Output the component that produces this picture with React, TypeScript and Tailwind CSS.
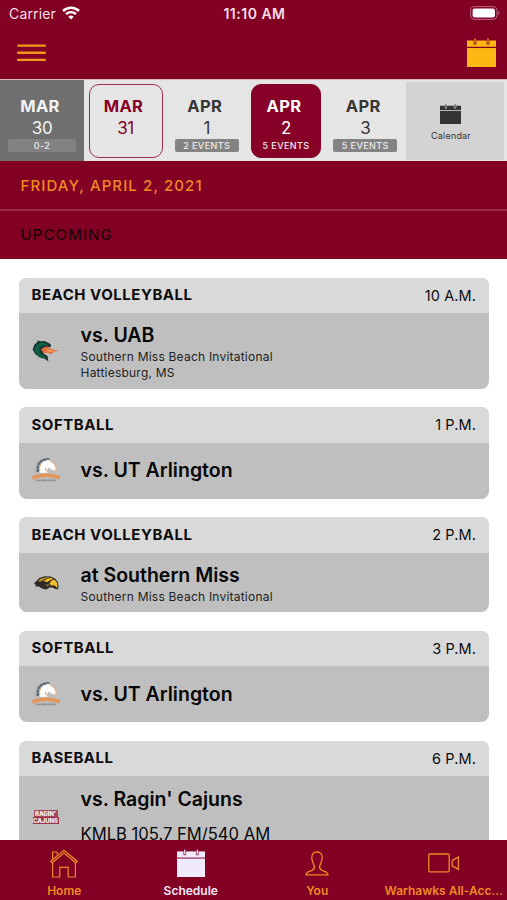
import { ReactNode } from "react";
import clsx from "clsx";

type DayProps = {
  month: string;
  day: string;
  badge?: string;
  variant?: "past" | "today" | "selected" | "normal";
};

type GameProps = {
  sport: string;
  time: string;
  title: string;
  lines?: string[];
  radio?: string;
  logo: ReactNode;
  bodyClass: string;
};

function CalendarIcon({ className, line }: { className: string; line: string }) {
  return (
    <svg viewBox="0 0 29 29" className={className} preserveAspectRatio="none">
      <path d="M0 2.5h29V29H0z" fill="currentColor" />
      <path d="M0 9.4h29" stroke={line} strokeWidth="1.3" />
      <path d="M8 2v4.6M21 2v4.6" stroke={line} strokeWidth="2.8" />
      <path d="M8 .4v5M21 .4v5" stroke="currentColor" strokeWidth="1.2" />
    </svg>
  );
}

function BlazersLogo() {
  return (
    <svg viewBox="0 0 27 22" className="w-[27px] h-[22px]">
      <path d="M.6 9.6 2.4 4.6 5.6 2 5.2.2 8 1.2l4.6-.2 3 1.4 3.2 1.8.2 2.6-4.4.6-4.6 1.6 1.4 4.4 4.2 2.6.8 5.6-3.6-2.8-5-1.4L3.2 14z" fill="#1c332e" />
      <path d="M2.2 9.6 4 5.4l4-2.6 4.6-.2 4 2.6-5 .2-3.8 2-.8 3.600 2.200 3.600 4 2.200.6 2.400-3-1.800-4.600-1.200L3.800 13z" fill="#0c5f46" />
      <path d="M9 9.200 12.600 7l4.200.6 2.400 1.400 7.400 1.800-4.600.8-2.600 2.600-3.600-1.400-3.800.4z" fill="#e2703f" />
      <path d="M15 9.400l4.600 1 3.400.6-3.800.8-3.600-.6z" fill="#f7a560" />
      <path d="M13 5.600l3.600.4-2.200.8z" fill="#c04a35" />
    </svg>
  );
}

function MavericksLogo() {
  return (
    <svg viewBox="0 0 28 24" className="w-7 h-6">
      <path d="M6 14C4.400 8 7.200 2.800 12.800 1.600L17.400.8" fill="none" stroke="#566774" strokeWidth="2.400" strokeDasharray="3 .5" />
      <path d="M8 14.800C6.600 8.600 9 3.600 14.400 2.600l2-1.200.8 1.400c3.600.6 6 3.600 7.400 8.200l-1.600 1.800-3-1-2.600-2-2.800 1.800 1.400 3.200z" fill="#fff" />
      <path d="M10.400 4.200C7.800 6.600 7 9.600 8 13M13.600 9.400c-.6 2 .4 4 2.600 5.200M18.400 3.200c2.600 1 4.800 3.800 6 7.600l-1.400 1.600" fill="none" stroke="#eda26c" strokeWidth="1" />
      <path d="M.4 20C8 16.400 20 16.400 27.600 20" fill="none" stroke="#e59355" strokeWidth="3.600" />
      <path d="M3 19.400C10 17.200 18 17.200 25 19.400" fill="none" stroke="#d9a781" strokeWidth="1" strokeDasharray="1.400 1.200" />
      <path d="M4.400 22.400h19.400" stroke="#84898c" strokeWidth="1.600" strokeDasharray="1.800 .5" />
    </svg>
  );
}

function GoldenEaglesLogo() {
  return (
    <svg viewBox="0 0 25 14" className="w-[25px] h-[14px] ml-0.5">
      <path d="M0 7.400 2.400 5 5.200 2 10.600.2l6 .2 4.400 2 2.600 3.400 1 4.200-.6 3.200-2.800-.2-2.600-1.400-3.200-.2-3 2.200-4-.8-3.800-2.200-3.400-.2.800-1.400z" fill="#2b2a26" />
      <path d="M3.600 5.600 6.400 2.800l5-1.600 4.400.4-4.600 1.200-4 2.600z" fill="#b08e2c" />
      <path d="M9.400 5 13 2.800l3.800-1 2.800 1.200-3.600 1.200-2.600 2z" fill="#ecb523" />
      <path d="M15.400 7.400l2.200-2.800 3.200-.8 2 2.600.8 3.400-.6 2.400-1.200-2-2.200-1-2.600.2z" fill="#f4c02c" />
      <path d="M11 8.600l3.400-.6 1.200 1.400-2.400 1z" fill="#7c6a3a" />
    </svg>
  );
}

function CajunsLogo() {
  return (
    <div className="w-[26px] ml-px mt-px flex flex-col items-center text-[#f3e9eb] font-black text-[6px] leading-[7px] tracking-[-0.1px]">
      <span className="w-6 h-[7px] bg-[#a4475a] text-center">RAGIN'</span>
      <span className="w-[26px] h-[7px] bg-[#98344a] text-center">CAJUNS</span>
    </div>
  );
}

function Day({ month, day, badge, variant = "normal" }: DayProps) {
  return (
    <div
      className={clsx(
        "h-full flex flex-col items-center pt-[4px]",
        variant === "past" && "w-[84px] bg-[#6f6f6f] text-[#f3f3f3]",
        variant === "today" && "w-[83px] text-[#860027]",
        variant === "selected" && "w-[79px] text-white",
        variant === "normal" && "w-[79.5px] text-[#363636]"
      )}
    >
      <div
        className={clsx(
          "h-[74px] flex flex-col items-center pt-[11px] rounded-[10px] border",
          variant === "past" && "w-[70px] border-transparent",
          variant === "today" && "w-[74px] border-[#9c2c4c]",
          variant === "selected" && "w-[70px] border-[#860027] bg-[#860027]",
          variant === "normal" && "w-[66px] border-transparent"
        )}
      >
        <span className="mr-[4px] text-[16.5px] leading-[20px] font-bold tracking-[0.4px]">{month}</span>
        <span className="mt-[2px] text-[17px] leading-[20px] tracking-[-0.4px]">{day}</span>
        {badge && (
          <span
            className={clsx(
              "mt-px w-full h-[13px] rounded-[2px] text-center text-[9px] leading-[13px] font-medium tracking-[0.4px] text-[#ececec]",
              variant === "past" && "bg-[#828282]",
              variant === "normal" && "bg-[#838383]"
            )}
          >
            {badge}
          </span>
        )}
      </div>
    </div>
  );
}

function GameCard({ sport, time, title, lines = [], radio, logo, bodyClass }: GameProps) {
  return (
    <div className="shrink-0 rounded-[8px] overflow-hidden bg-[#bfbfbf]">
      <div className="h-[35.5px] px-[12.5px] flex items-center justify-between bg-[#d9d9d9] text-[15px] text-[#0c0c0c]">
        <span className="font-bold tracking-[0.52px]">{sport}</span>
        <span className="text-[14.5px] tracking-[0.1px]">{time}</span>
      </div>
      <div className={clsx("flex items-center", bodyClass)}>
        <div className="w-[61.5px] pl-[12.5px] flex">{logo}</div>
        <div className={clsx("text-[#060606]", lines.length > 0 && "pt-[2px]")}>
          <p className="text-[19.5px] leading-[24px] font-semibold whitespace-nowrap">{title}</p>
          {lines.length > 0 && (
            <div className="mt-[2px]">
              {lines.map((line) => (
                <p key={line} className="text-[12px] leading-[16px] text-[#222] tracking-[0.22px] whitespace-nowrap">
                  {line}
                </p>
              ))}
            </div>
          )}
          {radio && <p className="mt-[11px] text-[16.6px] leading-[24px] whitespace-nowrap">{radio}</p>}
        </div>
      </div>
    </div>
  );
}

const days: DayProps[] = [
  { month: "MAR", day: "30", badge: "0-2", variant: "past" },
  { month: "MAR", day: "31", variant: "today" },
  { month: "APR", day: "1", badge: "2 EVENTS" },
  { month: "APR", day: "2", badge: "5 EVENTS", variant: "selected" },
  { month: "APR", day: "3", badge: "5 EVENTS" },
];

const games: GameProps[] = [
  {
    sport: "BEACH VOLLEYBALL",
    time: "10 A.M.",
    title: "vs. UAB",
    lines: ["Southern Miss Beach Invitational", "Hattiesburg, MS"],
    logo: <BlazersLogo />,
    bodyClass: "h-[75.5px]",
  },
  { sport: "SOFTBALL", time: "1 P.M.", title: "vs. UT Arlington", logo: <MavericksLogo />, bodyClass: "h-[56px] pb-px" },
  {
    sport: "BEACH VOLLEYBALL",
    time: "2 P.M.",
    title: "at Southern Miss",
    lines: ["Southern Miss Beach Invitational"],
    logo: <GoldenEaglesLogo />,
    bodyClass: "h-[59.5px]",
  },
  { sport: "SOFTBALL", time: "3 P.M.", title: "vs. UT Arlington", logo: <MavericksLogo />, bodyClass: "h-[56px] pb-px" },
  {
    sport: "BASEBALL",
    time: "6 P.M.",
    title: "vs. Ragin' Cajuns",
    radio: "KMLB 105.7 FM/540 AM",
    logo: <CajunsLogo />,
    bodyClass: "h-[80px]",
  },
];

function Tab({ label, icon, active }: { label: string; icon: ReactNode; active?: boolean }) {
  return (
    <div className={clsx("flex-1 min-w-0 flex flex-col items-center pt-[9px]", active ? "text-[#efeafb]" : "text-[#ee8a22]")}>
      <div className="h-[29px] flex items-start">{icon}</div>
      <span className="mt-[5px] text-[12px] leading-[16px] font-semibold whitespace-nowrap">{label}</span>
    </div>
  );
}

export default function App() {
  return (
    <div className="w-full h-[900px] flex flex-col overflow-hidden bg-white font-['Inter',sans-serif]">
      <header className="h-[79px] shrink-0 bg-[#830025]">
        <div className="h-7 pb-px grid grid-cols-3 items-center pl-[9px] pr-[7px] text-[14px] text-[#f5dfe5]">
          <div className="flex items-center gap-[6px]">
            <span className="tracking-[0.15px]">Carrier</span>
            <svg viewBox="0 0 18 14" className="w-[18px] h-[14px] mb-0.5" fill="none" stroke="#fff">
              <path d="M1 5a11.4 11.4 0 0 1 16 0" strokeWidth="2.5" />
              <path d="M4 8.1a7.2 7.2 0 0 1 10 0" strokeWidth="2.4" />
              <path d="M9 13.6 6.2 10.8a4 4 0 0 1 5.6 0z" fill="#fff" stroke="none" />
            </svg>
          </div>
          <span className="text-center font-semibold tracking-[0.5px] whitespace-nowrap">11:10 AM</span>
          <svg viewBox="0 0 30 14" className="w-[30px] h-[14px] justify-self-end mb-0.5">
            <rect x=".6" y=".6" width="26.4" height="12.8" rx="4" fill="none" stroke="#b66a80" />
            <rect x="2.6" y="2.6" width="22.4" height="8.8" rx="2.2" fill="#fff" />
            <path d="M28.3 4.8c1.6.8 1.6 3.6 0 4.4z" fill="#b66a80" />
          </svg>
        </div>
        <div className="h-[51px] flex justify-between pl-[17px] pr-[11px]">
          <svg viewBox="0 0 29 19" className="mt-[15px] w-[29px] h-[19px]" stroke="#ef981b" strokeWidth="2.400" strokeLinecap="round">
            <path d="M1.200 2.600h26.600M1.200 9.700h26.600M1.200 16.900h26.600" />
          </svg>
          <CalendarIcon className="mt-[10px] w-[29px] h-[29px] text-[#fdb813]" line="#830025" />
        </div>
      </header>

      <div className="h-[82px] shrink-0 flex bg-[#e5e5e5] border-t border-[#d8bcc4]">
        {days.map((d) => (
          <Day key={d.month + d.day} {...d} />
        ))}
        <div className="mt-[2px] h-[78px] w-[98px] pr-[8px] ml-px flex flex-col items-center bg-[#d3d3d3] text-[#343434]">
          <CalendarIcon className="mt-[22px] mr-[2px] w-[21px] h-[20px]" line="#c5c5c5" />
          <span className="mt-[6px] text-[9px] leading-[12px] tracking-[0.2px]">Calendar</span>
        </div>
      </div>

      <div className="h-[98px] shrink-0 bg-[#830025] text-[15px] tracking-[1.1px] font-medium">
        <div className="h-[50px] pt-[3px] pl-[20.5px] flex items-center border-b-2 border-[#952c4a] text-[#f08a20]">FRIDAY, APRIL 2, 2021</div>
        <div className="h-12 pl-[20.5px] flex items-center text-[#1d0207]">UPCOMING</div>
      </div>

      <main className="flex-1 min-h-0 overflow-hidden flex flex-col gap-[18.5px] pt-[18.75px] pl-[19px] pr-[18.5px]">
        {games.map((g, i) => (
          <GameCard key={i} {...g} />
        ))}
      </main>

      <nav className="h-[60px] shrink-0 pl-px flex bg-[#830025]">
        <Tab
          label="Home"
          icon={
            <svg viewBox="0 0 28 29" className="w-7 h-[29px]" fill="none" stroke="currentColor" strokeWidth="1.2">
              <path d="M.8 12.2 14 1.2l13.2 11-1.3 1.6L14 4 2.1 13.8z" />
              <path d="M2.6 9.6V3h4.6v2.8M2.6 14v14h7.2V18.4h8.4V28h7.2V14" />
            </svg>
          }
        />
        <Tab label="Schedule" active icon={<CalendarIcon className="w-[28px] h-[28px]" line="#9d3654" />} />
        <Tab
          label="You"
          icon={
            <svg viewBox="0 0 24 25" className="w-6 h-[25px] mt-[2px]" fill="none" stroke="currentColor" strokeWidth="1.3">
              <path d="M12 1C8.400 1 6.600 3.200 6.800 7c.2 3.600 1.400 5.400 2.600 8.200.4 2.200-.4 3.400-2.400 4.200-3 1-5.800 1.400-6 4.400h22c-.2-3-3-3.400-6-4.400-2-.8-2.800-2-2.400-4.200 1.200-2.800 2.400-4.600 2.600-8.200C17.400 3.200 15.600 1 12 1z" />
            </svg>
          }
        />
        <Tab
          label="Warhawks All-Acc..."
          icon={
            <svg viewBox="0 0 32 20" className="w-8 h-5 mt-[4px]" fill="none" stroke="currentColor" strokeWidth="1.3">
              <rect x=".8" y="1" width="20.400" height="17.800" rx="1.200" />
              <path d="M24.200 7.600 30.400 4v12.400l-6.200-3.600z" />
            </svg>
          }
        />
      </nav>
    </div>
  );
}
